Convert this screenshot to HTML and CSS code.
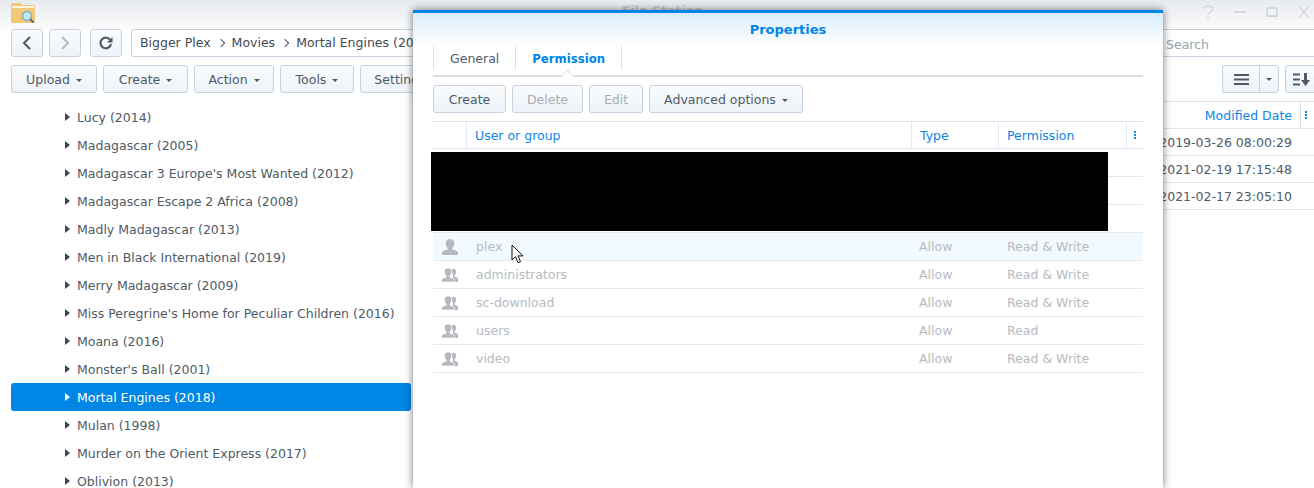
FILE: index.html
```html
<!DOCTYPE html>
<html lang="en">
<head>
<meta charset="utf-8">
<title>File Station</title>
<link rel="stylesheet" href="styles.css">
</head>
<body>
<div class="app">
  <header class="titlebar">
    <svg class="app-icon" width="26" height="24" viewBox="0 0 26 24"><path d="M1 4a2 2 0 0 1 2-2h7l2 2h11a2 2 0 0 1 2 2v15a1 1 0 0 1-1 1H2a1 1 0 0 1-1-1z" fill="#f0c878"/><path d="M2 5h22v2H2z" fill="#fff6df"/><circle cx="17" cy="15" r="4.500" fill="#bfe6f5" stroke="#7fa8b8" stroke-width="1.300"/><path d="M20 18l3.500 3.500" stroke="#667" stroke-width="2"/></svg>
    <span class="app-title">File Station</span>
    <div class="win-controls">
      <svg width="12" height="14" viewBox="0 0 12 14"><path d="M1.500 4c0-4 9-4 9 0 0 3-4.500 3-4.500 6M6 11.500v2" fill="none" stroke="#d6d9dc" stroke-width="1.500"/></svg>
      <svg width="12" height="14" viewBox="0 0 12 14"><path d="M0 7h12" stroke="#d6d9dc" stroke-width="2"/></svg>
      <svg width="12" height="14" viewBox="0 0 12 14"><path d="M1 3h10v8H1z" fill="none" stroke="#d6d9dc" stroke-width="2"/></svg>
      <svg width="12" height="14" viewBox="0 0 12 14"><path d="M1 1l10 12M11 1L1 13" stroke="#d6d9dc" stroke-width="1.500"/></svg>
    </div>
  </header>
  <div class="navrow">
    <button class="btn square"><svg width="10" height="14" viewBox="0 0 10 14"><path d="M8 1L2 7l6 6" fill="none" stroke="#4f5a66" stroke-width="2"/></svg></button>
    <button class="btn square"><svg width="10" height="14" viewBox="0 0 10 14"><path d="M2 1l6 6-6 6" fill="none" stroke="#b4bac0" stroke-width="2"/></svg></button>
    <button class="btn square refresh"><svg width="14" height="14" viewBox="0 0 14 14"><path d="M11.500 4.500A5.300 5.300 0 1 0 12 8" fill="none" stroke="#4f5a66" stroke-width="2.200"/><path d="M13.500 1v5.500H8z" fill="#4f5a66"/></svg></button>
    <div class="pathbar"><span>Bigger Plex</span><i class="sep"></i><span>Movies</span><i class="sep"></i><span>Mortal Engines (2018)</span></div>
    <div class="search">Search</div>
  </div>
  <div class="toolrow">
    <button class="btn b-upload">Upload<i class="caret"></i></button>
    <button class="btn b-newitem">Create<i class="caret"></i></button>
    <button class="btn b-action">Action<i class="caret"></i></button>
    <button class="btn b-tools">Tools<i class="caret"></i></button>
    <button class="btn b-settings">Settings</button>
    <div class="spacer"></div>
    <div class="viewgroup">
      <button class="btn view-main"><svg width="15" height="11" viewBox="0 0 15 11"><path d="M0 1h15M0 5.500h15M0 10h15" stroke="#4f5a66" stroke-width="2"/></svg></button>
      <button class="btn view-drop"><i class="caret flat"></i></button>
    </div>
    <button class="btn sort"><svg width="17" height="13" viewBox="0 0 17 13"><path d="M0 1.500h7M0 6.500h7M0 11.500h7" stroke="#4f5a66" stroke-width="2"/><path d="M11 0h3v7h3l-4.500 6L8 7h3z" fill="#4f5a66"/></svg></button>
  </div>
  <div class="panes">
    <ul class="tree">
      <li><i class="arrow"></i>Lucy (2014)</li>
      <li><i class="arrow"></i>Madagascar (2005)</li>
      <li><i class="arrow"></i>Madagascar 3 Europe's Most Wanted (2012)</li>
      <li><i class="arrow"></i>Madagascar Escape 2 Africa (2008)</li>
      <li><i class="arrow"></i>Madly Madagascar (2013)</li>
      <li><i class="arrow"></i>Men in Black International (2019)</li>
      <li><i class="arrow"></i>Merry Madagascar (2009)</li>
      <li><i class="arrow"></i>Miss Peregrine's Home for Peculiar Children (2016)</li>
      <li><i class="arrow"></i>Moana (2016)</li>
      <li><i class="arrow"></i>Monster's Ball (2001)</li>
      <li class="selected"><i class="arrow"></i>Mortal Engines (2018)</li>
      <li><i class="arrow"></i>Mulan (1998)</li>
      <li><i class="arrow"></i>Murder on the Orient Express (2017)</li>
      <li><i class="arrow"></i>Oblivion (2013)</li>
    </ul>
    <div class="files">
      <div class="files-head"><span class="date-col">Modified Date</span><span class="more"><i></i><i></i><i></i></span></div>
      <div class="files-row"><span class="date-col">2019-03-26 08:00:29</span></div>
      <div class="files-row"><span class="date-col">2021-02-19 17:15:48</span></div>
      <div class="files-row"><span class="date-col">2021-02-17 23:05:10</span></div>
    </div>
  </div>
</div>

<section class="modal">
  <h1 class="modal-title">Properties</h1>
  <div class="modal-body">
    <nav class="tabs">
      <span class="tab">General</span>
      <span class="tab active">Permission</span>
    </nav>
    <div class="modal-tools">
      <button class="btn b-create">Create</button>
      <button class="btn off b-delete">Delete</button>
      <button class="btn off b-edit">Edit</button>
      <button class="btn b-advanced">Advanced options<i class="caret"></i></button>
    </div>
    <div class="perm-table">
      <div class="perm-row perm-head">
        <span class="c-icon"></span><span class="c-name">User or group</span><span class="c-type">Type</span><span class="c-perm">Permission</span><span class="c-more more"><i></i><i></i><i></i></span>
      </div>
      <div class="perm-row"></div>
      <div class="perm-row"></div>
      <div class="perm-row"></div>
      <div class="perm-row hover">
        <span class="c-icon"><svg width="18" height="16" viewBox="0 0 18 16"><use href="#user"/></svg></span><span class="c-name">plex</span><span class="c-type">Allow</span><span class="c-perm">Read &amp; Write</span>
      </div>
      <div class="perm-row">
        <span class="c-icon"><svg width="18" height="16" viewBox="0 0 18 16"><use href="#group"/></svg></span><span class="c-name">administrators</span><span class="c-type">Allow</span><span class="c-perm">Read &amp; Write</span>
      </div>
      <div class="perm-row">
        <span class="c-icon"><svg width="18" height="16" viewBox="0 0 18 16"><use href="#group"/></svg></span><span class="c-name">sc-download</span><span class="c-type">Allow</span><span class="c-perm">Read &amp; Write</span>
      </div>
      <div class="perm-row">
        <span class="c-icon"><svg width="18" height="16" viewBox="0 0 18 16"><use href="#group"/></svg></span><span class="c-name">users</span><span class="c-type">Allow</span><span class="c-perm">Read</span>
      </div>
      <div class="perm-row">
        <span class="c-icon"><svg width="18" height="16" viewBox="0 0 18 16"><use href="#group"/></svg></span><span class="c-name">video</span><span class="c-type">Allow</span><span class="c-perm">Read &amp; Write</span>
      </div>
    </div>
  </div>
  <div class="redaction"></div>
</section>

<svg class="cursor" width="14" height="20" viewBox="0 0 14 20"><path d="M1 1v15l3.500-3.300 2.500 6 2.500-1-2.500-5.800h5z" fill="#fff" stroke="#111" stroke-width="1"/></svg>

<svg class="defs" width="0" height="0">
  <defs>
    <g id="user"><path d="M9 0c2.800 0 4.300 1.900 4.300 4.500 0 2-.9 3.700-2.100 4.600v1.300c2.700.7 5.800 1.500 5.800 3.600v2H1v-2c0-2.100 3.100-2.900 5.800-3.600V9.100C5.600 8.200 4.700 6.500 4.700 4.500 4.700 1.900 6.200 0 9 0z" fill="#b4b9bf"/></g>
    <g id="group"><path d="M12 1.500c2 0 3.100 1.400 3.100 3.400 0 1.500-.7 2.800-1.500 3.500v1.100c1.600.5 3.400 1.100 3.400 2.800V15h-5V9l-1.500-6z" fill="#b4b9bf"/><path d="M7 1c2.400 0 3.700 1.600 3.700 3.800 0 1.700-.8 3.200-1.800 3.900v1.500c2.300.6 4.600 1.300 4.600 3.300V15H.5v-1.500c0-2 2.300-2.700 4.600-3.300V8.700C4.100 8 3.300 6.500 3.300 4.800 3.300 2.600 4.600 1 7 1z" fill="#b4b9bf" stroke="#fff" stroke-width=".7"/></g>
  </defs>
</svg>
</body>
</html>
```
FILE: styles.css
```css
* { box-sizing: border-box; }
html, body { margin: 0; height: 488px; overflow: hidden; background: #fff; }
body { position: relative; font: 12.500px/1 "DejaVu Sans", sans-serif; color: #4f5a66; }
i { display: inline-block; font-style: normal; }
ul { list-style: none; margin: 0; padding: 0; }
.defs { position: absolute; }

.app { height: 488px; display: flex; flex-direction: column; }
.titlebar { height: 29px; flex: none; display: flex; align-items: flex-start; background: linear-gradient(#e8ebee, #fbfbfc); padding-left: 10px; position: relative; }
.app-icon { margin-top: 1px; }
.app-title { position: absolute; left: 622px; top: 5px; font-weight: bold; color: #c8ccd0; }
.win-controls { margin-left: auto; display: flex; gap: 20px; padding: 5px 4px 0 0; }
.win-controls svg { flex: none; }

.btn { height: 28px; padding: 2px 0 0; font: inherit; color: #4f5a66; border: 1px solid #c6d2df; border-radius: 3px; background: linear-gradient(#fafcfe, #edf3f9); display: inline-flex; align-items: center; justify-content: center; white-space: nowrap; flex: none; }
.btn.off { color: #a8aeb5; }
.b-upload { width: 86px; }
.b-newitem { width: 85px; }
.b-action { width: 80px; }
.b-tools { width: 74px; }
.b-settings { width: 80px; }
.b-create { width: 73px; }
.b-delete { width: 71px; }
.b-edit { width: 54px; }
.b-advanced { width: 154px; }
.caret { width: 0; height: 0; margin-left: 6px; border: 3px solid transparent; border-top: 3px solid #4f5a66; border-bottom: 0; }

.navrow { display: flex; height: 28px; margin-left: 11px; flex: none; }
.square { width: 32px; padding: 0; margin-right: 6px; }
.refresh { margin-left: 3px; margin-right: 9px; }
.pathbar { flex: 1; display: flex; align-items: center; padding: 0 0 0 8px; border: 1px solid #c6d2df; border-right: 0; border-radius: 3px 0 0 3px; color: #414b55; white-space: nowrap; }
.sep { width: 6px; height: 6px; border: solid #4f5a66; border-width: 1.500px 1.500px 0 0; transform: rotate(45deg); margin: 0 8px 0 7px; }
.search { width: 148px; flex: none; padding: 9px 0 0 0; border: 1px solid #c6d2df; border-width: 1px 0; color: #9aa1a8; }

.toolrow { display: flex; gap: 6px; height: 28px; margin: 8px 0 0 11px; flex: none; }
.spacer { flex: 1; }
.viewgroup { display: flex; }
.view-main { width: 37px; padding: 0; border-radius: 3px 0 0 3px; border-right: 0; }
.view-drop { width: 20px; padding: 0; border-radius: 0 3px 3px 0; }
.caret.flat { margin: 0; }
.sort { width: 32px; padding: 0; margin-right: -3px; }

.panes { flex: 1; display: flex; min-height: 0; margin-top: 8px; }
.tree { width: 400px; margin: 2px 0 0 11px; flex: none; overflow: hidden; }
.tree li { height: 28px; line-height: 29px; padding-left: 66px; border-radius: 3px; white-space: nowrap; position: relative; }
.arrow { position: absolute; left: 54px; top: 10px; width: 0; height: 0; border: 4px solid transparent; border-left: 5px solid #3f4852; border-right: 0; }
.tree .selected { background: #0086e5; color: #fff; }
.selected .arrow { border-left-color: #fff; }

.files { flex: 1; min-width: 0; }
.files-head, .files-row { display: flex; height: 27px; align-items: center; justify-content: flex-end; border-bottom: 1px solid #e3e8ee; }
.files-head { height: 28px; border-top: 1px solid #d9e0e8; color: #0e86e4; }
.date-col { padding-right: 8px; white-space: nowrap; }
.files-row { padding: 2px 14px 0 0; }
.files-head .date-col { height: 100%; line-height: 28px; border-right: 1px solid #d9e6f2; }
.more { width: 13px; padding-left: 4px; display: flex; flex-direction: column; align-items: flex-start; gap: 1px; flex: none; }
.more i { width: 2px; height: 2px; background: #0e86e4; }

.modal { position: absolute; left: 413px; top: 10px; width: 750px; height: 478px; background: linear-gradient(#d9edfc, #fff 34px); border-top: 3px solid #0086e5; box-shadow: 0 0 8px rgba(0, 0, 0, .55); }
.modal-title { margin: 0; height: 33px; padding-top: 10px; font-size: 13px; line-height: 14px; font-weight: bold; text-align: center; color: #0086e5; }
.modal-body { padding: 0 20px; }
.tabs { display: flex; height: 31px; border-bottom: 2px solid #dcdfe2; position: relative; }
.tab { height: 24px; padding: 0 16px; line-height: 26px; border-left: 1px solid #e0e3e6; }
.tab.active { color: #0086e5; font: bold 13px/26px "DejaVu Sans Condensed", "DejaVu Sans", sans-serif; border-right: 1px solid #e0e3e6; position: relative; }
.tab.active::after { content: ""; position: absolute; left: 47px; top: 24px; width: 8px; height: 8px; background: #fff; border: 1px solid #dcdfe2; border-width: 1px 0 0 1px; transform: rotate(45deg) translate(1px, 1px); }
.modal-tools { display: flex; gap: 6px; margin-top: 8px; }
.perm-table { margin-top: 8px; }
.perm-row { display: flex; height: 28px; align-items: center; border-bottom: 1px solid #e6e9ec; color: #b6bbc0; }
.perm-row.hover { background: #f2f9ff; }
.perm-row > .c-name, .perm-row > .c-type, .perm-row > .c-perm { padding-top: 2px; }
.perm-head { height: 28px; border-top: 1px solid #dfe4ea; border-bottom: 1px solid #dfe9f3; color: #0e86e4; }
.perm-head > span { height: 100%; line-height: 28px; border-right: 1px solid #dcebf7; }
.perm-row.perm-head > span { padding-top: 0; }
.c-icon { width: 33px; flex: none; display: flex; align-items: center; justify-content: center; }
.c-name { width: 445px; flex: none; padding-left: 10px; }
.c-type { width: 88px; flex: none; padding-left: 8px; }
.c-perm { width: 127px; flex: none; padding-left: 8px; }
.perm-head .c-icon { width: 34px; }
.perm-head .c-name { padding-left: 8px; }
.perm-head .c-type { width: 87px; }
.perm-head .c-perm { width: 128px; }
.perm-head .c-more { width: 17px; height: auto; border: 0; padding-left: 7px; }
.redaction { position: absolute; left: 18px; top: 139px; width: 677px; height: 79px; background: #000; }
.cursor { position: absolute; left: 511px; top: 244px; }
```
